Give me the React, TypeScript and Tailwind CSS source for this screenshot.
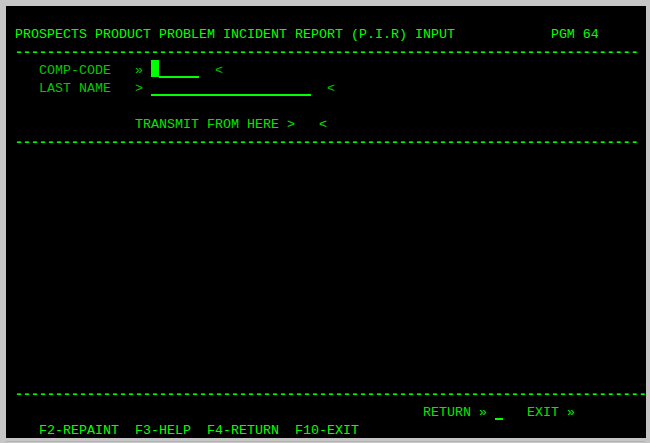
import React from "react";

const BRIGHT = "text-[#00ff00]";
const DIM = "text-[#00c800]";

function Row({ children }: { children?: React.ReactNode }) {
  return <div className="h-[18px] leading-[18px] whitespace-pre">{children}</div>;
}

function Field({ width }: { width: number }) {
  return (
    <span
      className="inline-block align-top h-[16px] border-b-2 border-[#00ff00]"
      style={{ width: `${width * 8}px` }}
    />
  );
}

export default function App() {
  const dashes78 = "-".repeat(78);
  const dashes79 = "-".repeat(79);
  const blanks = Array.from({ length: 13 });
  return (
    <div className="w-[650px] h-[443px] bg-[#c6c6c6] relative overflow-hidden">
      <div className="flex flex-col">
        <div className="ml-[6px] mt-[6px] w-[640px] h-[432px] bg-black overflow-hidden pt-[20px] pl-[9px] text-[13.333px] font-['Liberation_Mono',monospace]">
          <Row>
            <span className={BRIGHT}>{"PROSPECTS PRODUCT PROBLEM INCIDENT REPORT (P.I.R) INPUT            PGM 64"}</span>
          </Row>
          <Row>
            <span className={`${BRIGHT} font-bold`}>{dashes78}</span>
          </Row>
          <Row>
            <span className={DIM}>{"   COMP-CODE   » "}</span>
            <span className="inline-block align-top w-[8px] h-[17px] -translate-y-[2px] bg-[#00ff00]" />
            <Field width={5} />
            <span className={DIM}>{"  <"}</span>
          </Row>
          <Row>
            <span className={DIM}>{"   LAST NAME   > "}</span>
            <Field width={20} />
            <span className={DIM}>{"  <"}</span>
          </Row>
          <Row />
          <Row>
            <span className="text-[#00e600]">{"               TRANSMIT FROM HERE >   <"}</span>
          </Row>
          <Row>
            <span className={`${BRIGHT} font-bold`}>{dashes78}</span>
          </Row>
          {blanks.map((_, i) => (
            <Row key={i} />
          ))}
          <Row>
            <span className={`${BRIGHT} font-bold`}>{dashes79}</span>
          </Row>
          <Row>
            <span className="text-[#00e600]">{" ".repeat(51) + "RETURN » "}</span>
            <Field width={1} />
            <span className="text-[#00e600]">{"   EXIT »"}</span>
          </Row>
          <Row>
            <span className={BRIGHT}>{"   F2-REPAINT  F3-HELP  F4-RETURN  F10-EXIT"}</span>
          </Row>
        </div>
        <div className="ml-[6px] mt-[3px] w-[639px] h-[1px] bg-[#9fb4d6]" />
      </div>
    </div>
  );
}
